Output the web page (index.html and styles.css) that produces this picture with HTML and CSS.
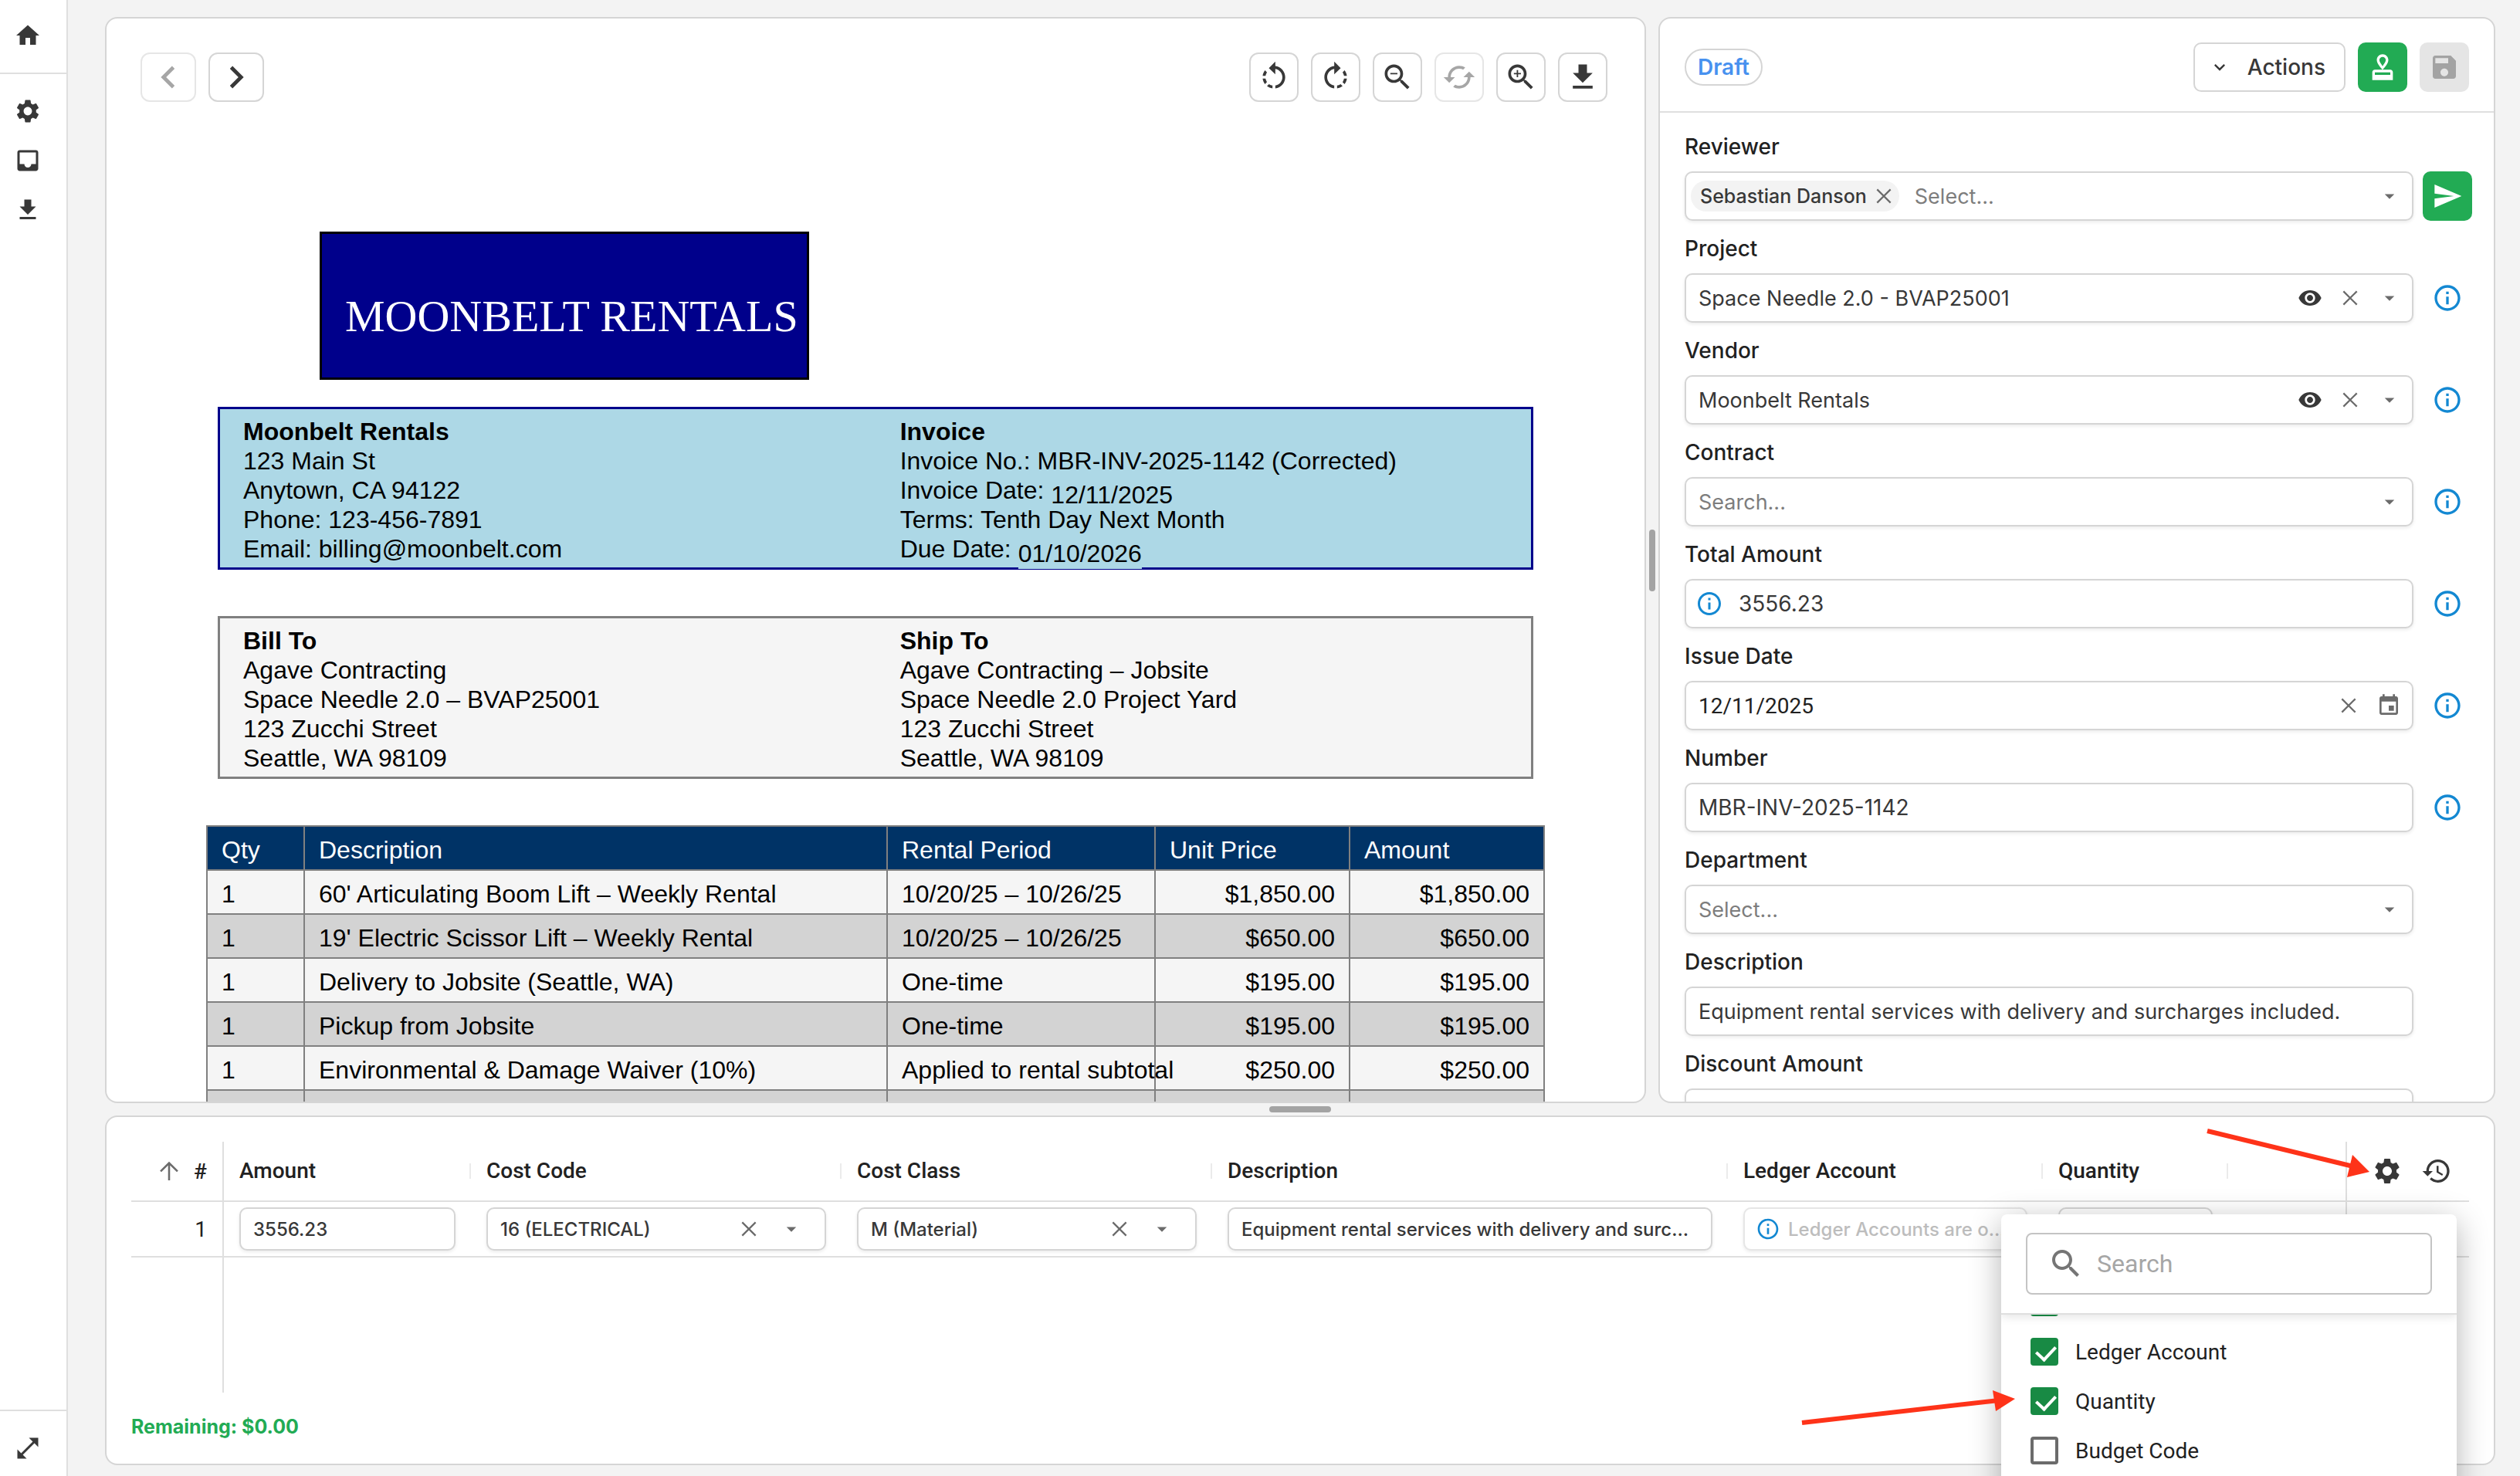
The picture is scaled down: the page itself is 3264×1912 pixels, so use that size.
FILE: index.html
```html
<!DOCTYPE html>
<html lang="en">
<head>
    <meta charset="UTF-8">
    <meta name="viewport" content="width=device-width, initial-scale=1.0">
    <title>Invoice MBR-INV-2025-1142</title>
    <link rel="stylesheet" href="styles.css">
</head>
<body>
    <!-- Icon sprite -->
    <svg class="sprite" aria-hidden="true">
        <symbol id="i-home" viewBox="0 0 24 24"><path d="M10 20v-6h4v6h5v-8h3L12 3 2 12h3v8z"/></symbol>
        <symbol id="i-settings" viewBox="0 0 24 24"><path d="M19.14 12.94c.04-.3.06-.61.06-.94 0-.32-.02-.64-.07-.94l2.03-1.58c.18-.14.23-.41.12-.61l-1.92-3.32c-.12-.22-.37-.29-.59-.22l-2.39.96c-.5-.38-1.03-.7-1.62-.94l-.36-2.54c-.04-.24-.24-.41-.48-.41h-3.84c-.24 0-.43.17-.47.41l-.36 2.54c-.59.24-1.13.57-1.62.94l-2.39-.96c-.22-.08-.47 0-.59.22L2.74 8.87c-.12.21-.08.47.12.61l2.03 1.58c-.05.3-.09.63-.09.94s.02.64.07.94l-2.03 1.58c-.18.14-.23.41-.12.61l1.92 3.32c.12.22.37.29.59.22l2.39-.96c.5.38 1.03.7 1.62.94l.36 2.54c.05.24.24.41.48.41h3.84c.24 0 .44-.17.47-.41l.36-2.54c.59-.24 1.13-.56 1.62-.94l2.39.96c.22.08.47 0 .59-.22l1.92-3.32c.12-.22.07-.47-.12-.61zM12 15.6c-1.98 0-3.6-1.62-3.6-3.6s1.62-3.6 3.6-3.6 3.6 1.62 3.6 3.6-1.62 3.6-3.6 3.6"/></symbol>
        <symbol id="i-inbox" viewBox="0 0 24 24"><path d="M19 3H4.99c-1.11 0-1.98.89-1.98 2L3 19c0 1.1.88 2 1.99 2H19c1.1 0 2-.9 2-2V5c0-1.11-.9-2-2-2m0 12h-4c0 1.66-1.35 3-3 3s-3-1.34-3-3H4.99V5H19z"/></symbol>
        <symbol id="i-download" viewBox="0 0 24 24"><path d="M19 9h-4V3H9v6H5l7 7zM5 18v2h14v-2z"/></symbol>
        <symbol id="i-expand" viewBox="0 0 24 24"><path d="M21 11V3h-8l3.29 3.29-10 10L3 13v8h8l-3.29-3.29 10-10z"/></symbol>
        <symbol id="i-prev" viewBox="0 0 24 24"><path d="M15.41 7.41 14 6l-6 6 6 6 1.41-1.41L10.83 12z"/></symbol>
        <symbol id="i-next" viewBox="0 0 24 24"><path d="M10 6 8.59 7.41 13.17 12l-4.58 4.59L10 18l6-6z"/></symbol>
        <symbol id="i-rotate-left" viewBox="0 0 24 24"><path d="M7.11 8.53 5.7 7.11C4.8 8.27 4.24 9.61 4.07 11h2.02c.14-.87.49-1.72 1.02-2.47M6.09 13H4.07c.17 1.39.72 2.73 1.62 3.89l1.41-1.42c-.52-.75-.87-1.59-1.01-2.47m1.01 5.32c1.16.9 2.51 1.44 3.9 1.61V17.9c-.87-.15-1.71-.49-2.46-1.03zM13 4.07V1L8.45 5.55 13 10V6.09c2.84.48 5 2.94 5 5.91s-2.16 5.43-5 5.91v2.02c3.95-.49 7-3.85 7-7.93s-3.05-7.44-7-7.93"/></symbol>
        <symbol id="i-rotate-right" viewBox="0 0 24 24"><path d="M15.55 5.55 11 1v3.07C7.06 4.56 4 7.92 4 12s3.05 7.44 7 7.93v-2.02c-2.84-.48-5-2.94-5-5.91s2.16-5.43 5-5.91V10zM19.93 11c-.17-1.39-.72-2.73-1.62-3.89l-1.42 1.42c.54.75.88 1.6 1.02 2.47zM13 17.9v2.02c1.39-.17 2.74-.71 3.9-1.61l-1.44-1.44c-.75.54-1.59.89-2.46 1.03m3.89-2.42 1.42 1.41c.9-1.16 1.45-2.5 1.62-3.89h-2.02c-.14.87-.48 1.72-1.02 2.48"/></symbol>
        <symbol id="i-zoom-out" viewBox="0 0 24 24"><path d="M15.5 14h-.79l-.28-.27C15.41 12.59 16 11.11 16 9.5 16 5.91 13.09 3 9.5 3S3 5.91 3 9.5 5.91 16 9.5 16c1.61 0 3.09-.59 4.23-1.57l.27.28v.79l5 4.99L20.49 19zm-6 0C7.01 14 5 11.99 5 9.5S7.01 5 9.5 5 14 7.01 14 9.5 11.99 14 9.5 14M7 9h5v1H7z"/></symbol>
        <symbol id="i-zoom-in" viewBox="0 0 24 24"><path d="M15.5 14h-.79l-.28-.27C15.41 12.59 16 11.11 16 9.5 16 5.91 13.09 3 9.5 3S3 5.91 3 9.5 5.91 16 9.5 16c1.61 0 3.09-.59 4.23-1.57l.27.28v.79l5 4.99L20.49 19zm-6 0C7.01 14 5 11.99 5 9.5S7.01 5 9.5 5 14 7.01 14 9.5 11.99 14 9.5 14m2.5-4h-2v2H9v-2H7V9h2V7h1v2h2z"/></symbol>
        <symbol id="i-reset" viewBox="0 0 24 24"><path d="m19 8-4 4h3c0 3.31-2.69 6-6 6-1.01 0-1.97-.25-2.8-.7l-1.46 1.46C8.97 19.54 10.43 20 12 20c4.42 0 8-3.58 8-8h3zM6 12c0-3.31 2.69-6 6-6 1.01 0 1.97.25 2.8.7l1.46-1.46C15.03 4.46 13.57 4 12 4c-4.42 0-8 3.58-8 8H1l4 4 4-4z"/></symbol>
        <symbol id="i-stamp" viewBox="0 0 24 24"><path d="M4 16v6h16v-6c0-1.1-.9-2-2-2H6c-1.1 0-2 .9-2 2m14 2H6v-2h12zM12 2C9.54 2 7.5 4.04 7.5 6.5c0 3.2 4.5 7.5 4.5 7.5s4.5-4.3 4.5-7.5C16.5 4.04 14.46 2 12 2m0 9.2c-.83-1.3-2.5-3.09-2.5-4.7C9.5 5.12 10.62 4 12 4s2.5 1.12 2.5 2.5c0 1.6-1.67 3.4-2.5 4.7"/></symbol>
        <symbol id="i-save" viewBox="0 0 24 24"><path d="M17 3H5c-1.11 0-2 .9-2 2v14c0 1.1.89 2 2 2h14c1.1 0 2-.9 2-2V7zm-5 16c-1.66 0-3-1.34-3-3s1.34-3 3-3 3 1.34 3 3-1.34 3-3 3m3-10H5V5h10z"/></symbol>
        <symbol id="i-send" viewBox="0 0 24 24"><path d="M2.01 21 23 12 2.01 3 2 10l15 2-15 2z"/></symbol>
        <symbol id="i-eye" viewBox="0 0 24 24"><path d="M12 4.5C7 4.5 2.73 7.61 1 12c1.73 4.39 6 7.5 11 7.5s9.27-3.11 11-7.5c-1.73-4.39-6-7.5-11-7.5M12 17c-2.76 0-5-2.24-5-5s2.24-5 5-5 5 2.24 5 5-2.24 5-5 5m0-8c-1.66 0-3 1.34-3 3s1.34 3 3 3 3-1.34 3-3-1.34-3-3-3"/></symbol>
        <symbol id="i-close" viewBox="0 0 24 24"><path d="M5.5 5.5l13 13M18.5 5.5l-13 13" fill="none" stroke="currentColor" stroke-width="1.7"/></symbol>
        <symbol id="i-caret" viewBox="0 0 24 24"><path d="m7 10 5 5 5-5z"/></symbol>
        <symbol id="i-chevron" viewBox="0 0 24 24"><path d="M16.59 8.59 12 13.17 7.41 8.59 6 10l6 6 6-6z"/></symbol>
        <symbol id="i-info" viewBox="0 0 24 24"><path d="M11 7h2v2h-2zm0 4h2v6h-2zm1-9C6.48 2 2 6.48 2 12s4.48 10 10 10 10-4.48 10-10S17.52 2 12 2m0 18c-4.41 0-8-3.59-8-8s3.59-8 8-8 8 3.59 8 8-3.59 8-8 8"/></symbol>
        <symbol id="i-calendar" viewBox="0 0 24 24"><path d="M17 12h-5v5h5zM16 1v2H8V1H6v2H5c-1.11 0-1.99.9-1.99 2L3 19c0 1.1.89 2 2 2h14c1.1 0 2-.9 2-2V5c0-1.1-.9-2-2-2h-1V1zm3 18H5V8h14z"/></symbol>
        <symbol id="i-up" viewBox="0 0 24 24"><path d="M12 20V5M4.7 12.3 12 5l7.3 7.3" fill="none" stroke="currentColor" stroke-width="1.7"/></symbol>
        <symbol id="i-history" viewBox="0 0 24 24"><path d="M13 3c-4.97 0-9 4.03-9 9H1l3.89 3.89.07.14L9 12H6c0-3.87 3.13-7 7-7s7 3.13 7 7-3.13 7-7 7c-1.93 0-3.68-.79-4.94-2.06l-1.42 1.42C8.27 19.99 10.51 21 13 21c4.97 0 9-4.03 9-9s-4.03-9-9-9m-1 5v5l4.28 2.54.72-1.21-3.5-2.08V8z"/></symbol>
        <symbol id="i-search" viewBox="0 0 24 24"><path d="M15.5 14h-.79l-.28-.27C15.41 12.59 16 11.11 16 9.5 16 5.91 13.09 3 9.5 3S3 5.91 3 9.5 5.91 16 9.5 16c1.61 0 3.09-.59 4.23-1.57l.27.28v.79l5 4.99L20.49 19zm-6 0C7.01 14 5 11.99 5 9.5S7.01 5 9.5 5 14 7.01 14 9.5 11.99 14 9.5 14"/></symbol>
    </svg>

    <div class="app">
        <nav class="sidebar" aria-label="Main">
            <div class="sidebar-top">
                <a class="sidebar-link" href="#" aria-label="Home"><svg class="icon icon-36"><use href="#i-home"/></svg></a>
            </div>
            <div class="sidebar-menu">
                <a class="sidebar-link" href="#" aria-label="Settings"><svg class="icon icon-36"><use href="#i-settings"/></svg></a>
                <a class="sidebar-link" href="#" aria-label="Inbox"><svg class="icon icon-36"><use href="#i-inbox"/></svg></a>
                <a class="sidebar-link" href="#" aria-label="Downloads"><svg class="icon icon-36"><use href="#i-download"/></svg></a>
            </div>
            <div class="sidebar-bottom">
                <button class="sidebar-link" type="button" aria-label="Expand"><svg class="icon icon-36"><use href="#i-expand"/></svg></button>
            </div>
        </nav>

        <main class="workspace">
            <!-- Document preview -->
            <section class="panel preview">
                <div class="toolbar">
                    <div class="toolbar-group">
                        <button class="tool tool-wide" type="button" aria-label="Previous page" disabled><svg class="icon icon-58"><use href="#i-prev"/></svg></button>
                        <button class="tool tool-wide" type="button" aria-label="Next page"><svg class="icon icon-58"><use href="#i-next"/></svg></button>
                    </div>
                    <div class="toolbar-group">
                        <button class="tool" type="button" aria-label="Rotate left"><svg class="icon icon-44"><use href="#i-rotate-left"/></svg></button>
                        <button class="tool" type="button" aria-label="Rotate right"><svg class="icon icon-44"><use href="#i-rotate-right"/></svg></button>
                        <button class="tool" type="button" aria-label="Zoom out"><svg class="icon icon-44"><use href="#i-zoom-out"/></svg></button>
                        <button class="tool" type="button" aria-label="Reset" disabled><svg class="icon icon-44"><use href="#i-reset"/></svg></button>
                        <button class="tool" type="button" aria-label="Zoom in"><svg class="icon icon-44"><use href="#i-zoom-in"/></svg></button>
                        <button class="tool" type="button" aria-label="Download"><svg class="icon icon-44"><use href="#i-download"/></svg></button>
                    </div>
                </div>

                <article class="invoice">
                    <div class="invoice-logo">MOONBELT RENTALS</div>

                    <div class="invoice-box invoice-box-blue">
                        <div>
                            <strong>Moonbelt Rentals</strong>
                            <p>123 Main St</p>
                            <p>Anytown, CA 94122</p>
                            <p>Phone: 123-456-7891</p>
                            <p>Email: billing@moonbelt.com</p>
                        </div>
                        <div>
                            <strong>Invoice</strong>
                            <p>Invoice No.: MBR-INV-2025-1142 (Corrected)</p>
                            <p>Invoice Date: <span class="amended">12/11/2025</span></p>
                            <p>Terms: Tenth Day Next Month</p>
                            <p>Due Date: <span class="amended">01/10/2026</span></p>
                        </div>
                    </div>

                    <div class="invoice-box invoice-box-gray">
                        <div>
                            <strong>Bill To</strong>
                            <p>Agave Contracting</p>
                            <p>Space Needle 2.0 – BVAP25001</p>
                            <p>123 Zucchi Street</p>
                            <p>Seattle, WA 98109</p>
                        </div>
                        <div>
                            <strong>Ship To</strong>
                            <p>Agave Contracting – Jobsite</p>
                            <p>Space Needle 2.0 Project Yard</p>
                            <p>123 Zucchi Street</p>
                            <p>Seattle, WA 98109</p>
                        </div>
                    </div>

                    <table class="invoice-table">
                        <colgroup>
                            <col class="c-qty">
                            <col class="c-desc">
                            <col class="c-period">
                            <col class="c-price">
                            <col class="c-total">
                        </colgroup>
                        <thead>
                            <tr><th>Qty</th><th>Description</th><th>Rental Period</th><th>Unit Price</th><th>Amount</th></tr>
                        </thead>
                        <tbody>
                            <tr><td>1</td><td>60' Articulating Boom Lift – Weekly Rental</td><td>10/20/25 – 10/26/25</td><td class="num">$1,850.00</td><td class="num">$1,850.00</td></tr>
                            <tr><td>1</td><td>19' Electric Scissor Lift – Weekly Rental</td><td>10/20/25 – 10/26/25</td><td class="num">$650.00</td><td class="num">$650.00</td></tr>
                            <tr><td>1</td><td>Delivery to Jobsite (Seattle, WA)</td><td>One-time</td><td class="num">$195.00</td><td class="num">$195.00</td></tr>
                            <tr><td>1</td><td>Pickup from Jobsite</td><td>One-time</td><td class="num">$195.00</td><td class="num">$195.00</td></tr>
                            <tr><td>1</td><td>Environmental &amp; Damage Waiver (10%)</td><td>Applied to rental subtotal</td><td class="num">$250.00</td><td class="num">$250.00</td></tr>
                            <tr><td></td><td></td><td></td><td></td><td></td></tr>
                        </tbody>
                    </table>
                </article>
            </section>

            <div class="splitter splitter-v"></div>

            <!-- Invoice form -->
            <section class="panel details">
                <header class="details-header">
                    <span class="status">Draft</span>
                    <div class="details-actions">
                        <button class="btn-actions" type="button"><svg class="icon icon-28"><use href="#i-chevron"/></svg>Actions</button>
                        <button class="btn-square btn-green" type="button" aria-label="Approve"><svg class="icon icon-40"><use href="#i-stamp"/></svg></button>
                        <button class="btn-square btn-disabled" type="button" aria-label="Save" disabled><svg class="icon icon-40"><use href="#i-save"/></svg></button>
                    </div>
                </header>

                <form class="form">
                    <div class="field">
                        <label for="reviewer">Reviewer</label>
                        <div class="control control-tags">
                            <span class="chip">Sebastian Danson<button type="button" aria-label="Remove Sebastian Danson"><svg class="icon icon-32"><use href="#i-close"/></svg></button></span>
                            <select id="reviewer" class="empty"><option>Select...</option></select>
                            <svg class="icon icon-30 muted"><use href="#i-caret"/></svg>
                        </div>
                        <button class="btn-square btn-green" type="button" aria-label="Send"><svg class="icon icon-40"><use href="#i-send"/></svg></button>
                    </div>
                    <div class="field">
                        <label for="project">Project</label>
                        <div class="control">
                            <select id="project"><option>Space Needle 2.0 - BVAP25001</option></select>
                            <button type="button" aria-label="View project"><svg class="icon icon-32"><use href="#i-eye"/></svg></button>
                            <button class="muted" type="button" aria-label="Clear project"><svg class="icon icon-32"><use href="#i-close"/></svg></button>
                            <svg class="icon icon-30 muted"><use href="#i-caret"/></svg>
                        </div>
                        <svg class="icon icon-40 info"><use href="#i-info"/></svg>
                    </div>
                    <div class="field">
                        <label for="vendor">Vendor</label>
                        <div class="control">
                            <select id="vendor"><option>Moonbelt Rentals</option></select>
                            <button type="button" aria-label="View vendor"><svg class="icon icon-32"><use href="#i-eye"/></svg></button>
                            <button class="muted" type="button" aria-label="Clear vendor"><svg class="icon icon-32"><use href="#i-close"/></svg></button>
                            <svg class="icon icon-30 muted"><use href="#i-caret"/></svg>
                        </div>
                        <svg class="icon icon-40 info"><use href="#i-info"/></svg>
                    </div>
                    <div class="field">
                        <label for="contract">Contract</label>
                        <div class="control">
                            <select id="contract" class="empty"><option>Search...</option></select>
                            <svg class="icon icon-30 muted"><use href="#i-caret"/></svg>
                        </div>
                        <svg class="icon icon-40 info"><use href="#i-info"/></svg>
                    </div>
                    <div class="field">
                        <label for="total">Total Amount</label>
                        <div class="control control-lead">
                            <svg class="icon icon-36 info"><use href="#i-info"/></svg>
                            <input id="total" class="figures" type="text" value="3556.23">
                        </div>
                        <svg class="icon icon-40 info"><use href="#i-info"/></svg>
                    </div>
                    <div class="field">
                        <label for="issued">Issue Date</label>
                        <div class="control">
                            <input id="issued" class="date" type="text" value="12/11/2025">
                            <button class="muted" type="button" aria-label="Clear date"><svg class="icon icon-32"><use href="#i-close"/></svg></button>
                            <button class="muted" type="button" aria-label="Choose date"><svg class="icon icon-32"><use href="#i-calendar"/></svg></button>
                        </div>
                        <svg class="icon icon-40 info"><use href="#i-info"/></svg>
                    </div>
                    <div class="field">
                        <label for="number">Number</label>
                        <div class="control"><input id="number" class="figures" type="text" value="MBR-INV-2025-1142"></div>
                        <svg class="icon icon-40 info"><use href="#i-info"/></svg>
                    </div>
                    <div class="field">
                        <label for="department">Department</label>
                        <div class="control">
                            <select id="department" class="empty"><option>Select...</option></select>
                            <svg class="icon icon-30 muted"><use href="#i-caret"/></svg>
                        </div>
                    </div>
                    <div class="field">
                        <label for="description">Description</label>
                        <div class="control"><input id="description" type="text" value="Equipment rental services with delivery and surcharges included."></div>
                    </div>
                    <div class="field">
                        <label for="discount">Discount Amount</label>
                        <div class="control"><input id="discount" type="text"></div>
                    </div>
                </form>
            </section>

            <div class="splitter splitter-h"></div>

            <!-- Line items -->
            <section class="panel lines">
                <table class="grid">
                    <colgroup>
                        <col class="g-index">
                        <col class="g-amount">
                        <col class="g-code">
                        <col class="g-class">
                        <col class="g-desc">
                        <col class="g-ledger">
                        <col class="g-qty">
                        <col class="g-fill">
                        <col class="g-tools">
                    </colgroup>
                    <thead>
                        <tr>
                            <th class="pin-left"><div class="sort"><svg class="icon icon-36 muted"><use href="#i-up"/></svg>#</div></th>
                            <th><div class="head">Amount</div></th>
                            <th><div class="head">Cost Code</div></th>
                            <th><div class="head">Cost Class</div></th>
                            <th><div class="head">Description</div></th>
                            <th><div class="head">Ledger Account</div></th>
                            <th><div class="head">Quantity</div></th>
                            <th></th>
                            <th class="pin-right">
                                <div class="grid-tools">
                                    <button type="button" aria-label="Columns"><svg class="icon icon-40"><use href="#i-settings"/></svg></button>
                                    <button type="button" aria-label="History"><svg class="icon icon-40"><use href="#i-history"/></svg></button>
                                </div>
                            </th>
                        </tr>
                    </thead>
                    <tbody>
                        <tr class="line">
                            <td class="pin-left">1</td>
                            <td><div class="control control-cell"><input type="text" aria-label="Amount" value="3556.23"></div></td>
                            <td>
                                <div class="control control-cell control-pick">
                                    <select aria-label="Cost Code"><option>16 (ELECTRICAL)</option></select>
                                    <button class="muted" type="button" aria-label="Clear cost code"><svg class="icon icon-32"><use href="#i-close"/></svg></button>
                                    <svg class="icon icon-30 muted"><use href="#i-caret"/></svg>
                                </div>
                            </td>
                            <td>
                                <div class="control control-cell control-pick">
                                    <select aria-label="Cost Class"><option>M (Material)</option></select>
                                    <button class="muted" type="button" aria-label="Clear cost class"><svg class="icon icon-32"><use href="#i-close"/></svg></button>
                                    <svg class="icon icon-30 muted"><use href="#i-caret"/></svg>
                                </div>
                            </td>
                            <td><div class="control control-cell"><input type="text" aria-label="Description" value="Equipment rental services with delivery and surcharges included."></div></td>
                            <td>
                                <div class="control control-cell control-off">
                                    <svg class="icon icon-32 info"><use href="#i-info"/></svg>
                                    <input type="text" aria-label="Ledger Account" value="Ledger Accounts are o..." disabled>
                                </div>
                            </td>
                            <td><div class="control control-cell"><input type="text" aria-label="Quantity"></div></td>
                            <td></td>
                            <td class="pin-right"></td>
                        </tr>
                        <tr class="rest">
                            <td class="pin-left"></td>
                            <td colspan="7"></td>
                            <td></td>
                        </tr>
                    </tbody>
                </table>
                <p class="remaining">Remaining: $0.00</p>

                <div class="columns-menu">
                    <div class="columns-search">
                        <label class="search-box">
                            <svg class="icon icon-48"><use href="#i-search"/></svg>
                            <input type="text" placeholder="Search" aria-label="Search">
                        </label>
                    </div>
                    <div class="columns-list">
                        <label class="columns-item"><input type="checkbox" aria-label="Description" checked></label>
                        <label class="columns-item"><input type="checkbox" checked>Ledger Account</label>
                        <label class="columns-item"><input type="checkbox" checked>Quantity</label>
                        <label class="columns-item"><input type="checkbox">Budget Code</label>
                    </div>
                </div>

                <svg class="pointer pointer-gear" viewBox="0 0 212 66" aria-hidden="true">
                    <path d="M1 6 190 52" stroke="#fe3319" stroke-width="6"/>
                    <path d="M211 59 189 37 182 66z" fill="#fe3319"/>
                </svg>
                <svg class="pointer pointer-quantity" viewBox="0 0 278 50" aria-hidden="true">
                    <path d="M1 43 256 14" stroke="#fe3319" stroke-width="6"/>
                    <path d="M277 12 248 1 252 28z" fill="#fe3319"/>
                </svg>
            </section>
        </main>
    </div>
</body>
</html>
```
FILE: styles.css
```css
* {
    margin: 0;
    padding: 0;
    box-sizing: border-box;
}

body {
    height: 100vh;
    overflow: hidden;
    background: #f3f3f3;
    color: #212121;
    font-family: Inter, Roboto, "Liberation Sans", sans-serif;
    font-size: 28px;
}

button, input, select {
    font: inherit;
    color: inherit;
    background: none;
    border: none;
    outline: none;
}

button {
    display: flex;
    align-items: center;
    justify-content: center;
}

/* Icons */
.sprite {
    position: absolute;
    width: 0;
    height: 0;
}

.icon {
    flex: none;
    display: block;
    fill: currentColor;
}

.icon-28 { width: 28px; height: 28px; }
.icon-30 { width: 30px; height: 30px; }
.icon-32 { width: 32px; height: 32px; }
.icon-36 { width: 36px; height: 36px; }
.icon-40 { width: 40px; height: 40px; }
.icon-44 { width: 44px; height: 44px; }
.icon-48 { width: 48px; height: 48px; }
.icon-58 { width: 58px; height: 58px; }

.muted {
    color: #6b6b6b;
}

.info {
    color: #1388d2;
}

/* Layout */
.app {
    display: flex;
    height: 100%;
}

.sidebar {
    display: flex;
    flex-direction: column;
    width: 88px;
    flex: none;
    background: #fff;
    border-right: 2px solid #dfdfdf;
    color: #383838;
}

.sidebar-link {
    display: flex;
    align-items: center;
    height: 64px;
    padding-left: 18px;
    color: inherit;
}

.sidebar-top {
    padding: 14px 0 16px;
    border-bottom: 2px solid #dfdfdf;
}

.sidebar-menu {
    flex: 1;
    padding-top: 16px;
}

.sidebar-bottom {
    padding: 16px 0 4px;
    border-top: 2px solid #dfdfdf;
}

.workspace {
    flex: 1;
    min-width: 0;
    display: grid;
    grid-template-columns: minmax(0, 1996fr) 16px minmax(0, 1084fr);
    grid-template-rows: minmax(0, 1fr) 16px auto;
    padding: 22px 32px 14px 48px;
}

.panel {
    background: #fff;
    border: 2px solid #d5d5d5;
    border-radius: 16px;
}

.splitter {
    display: flex;
    align-items: center;
    justify-content: center;
}

.splitter::before {
    content: "";
    background: #a3a3a3;
    border-radius: 4px;
}

.splitter-v::before {
    width: 8px;
    height: 80px;
}

.splitter-h {
    grid-column: 1 / -1;
}

.splitter-h::before {
    width: 80px;
    height: 8px;
}

/* Preview */
.preview {
    overflow: hidden;
    padding-top: 44px;
}

.toolbar {
    display: flex;
    justify-content: space-between;
    padding: 0 48px 0 44px;
}

.toolbar-group {
    display: flex;
    gap: 16px;
}

.tool {
    width: 64px;
    height: 64px;
    border: 2px solid #d5d5d5;
    border-radius: 12px;
    color: #383838;
}

.tool-wide {
    width: 72px;
}

.tool:disabled {
    color: #a6a6a6;
    border-color: #e6e6e6;
}

.invoice {
    padding: 168px 129px 0;
    color: #000;
    font-family: "Liberation Sans", Arial, sans-serif;
    font-size: 32px;
    line-height: 38px;
}

.invoice-logo {
    width: 634px;
    height: 192px;
    margin: 0 0 35px 147px;
    padding: 14px 0 0 30px;
    background: #00008b;
    border: 3px solid #000;
    color: #fff;
    font-family: "Liberation Serif", "Times New Roman", serif;
    font-size: 58px;
    line-height: 186px;
    white-space: nowrap;
}

.invoice-box {
    display: grid;
    grid-template-columns: 51% 49%;
    margin: 0 15px 60px;
    padding: 10px 0 5px 30px;
    border: 3px solid;
}

.invoice-box-blue {
    background: #add8e6;
    border-color: #00008b;
}

.invoice-box-gray {
    background: #f5f5f5;
    border-color: #808080;
}

.invoice-box strong {
    display: block;
}

/* Dates typed over the scanned page sit a little lower than the line */
.amended {
    padding-bottom: 2px;
    background: #add8e6;
    line-height: 0;
    vertical-align: -6px;
}

.invoice-table {
    width: 100%;
    table-layout: fixed;
    border-collapse: collapse;
}

.c-qty { width: 126px; }
.c-period { width: 347px; }
.c-price { width: 252px; }
.c-total { width: 252px; }

.invoice-table th,
.invoice-table td {
    height: 57px;
    padding: 4px 18px 0;
    border: 2px solid #808080;
    font-weight: normal;
    text-align: left;
    white-space: nowrap;
}

.invoice-table thead tr {
    background: #003366;
    color: #fff;
}

.invoice-table tbody tr {
    background: #f5f5f5;
}

.invoice-table tbody tr:nth-child(even) {
    background: #d3d3d3;
}

.invoice-table .num {
    text-align: right;
}

/* Details */
.details {
    overflow: hidden;
}

.details-header {
    display: flex;
    align-items: center;
    justify-content: space-between;
    height: 122px;
    padding: 6px 32px 0;
    border-bottom: 2px solid #dfdfdf;
}

.status {
    padding: 0 15px;
    border: 2px solid #d5d5d5;
    border-radius: 24px;
    color: #4791ef;
    font-weight: 600;
    line-height: 44px;
}

.details-actions {
    display: flex;
    gap: 16px;
}

.btn-actions {
    gap: 22px;
    height: 64px;
    padding: 0 24px 0 18px;
    border: 2px solid #d5d5d5;
    border-radius: 10px;
    color: #383838;
    font-weight: 500;
}

.btn-square {
    width: 64px;
    height: 64px;
    border-radius: 10px;
}

.btn-green {
    background: #22ab54;
    color: #fff;
}

.btn-disabled {
    background: #e5e5e5;
    color: #a3a3a3;
}

.form {
    display: flex;
    flex-direction: column;
    gap: 16px;
    padding: 24px 28px 0 32px;
}

.field {
    display: grid;
    grid-template-columns: minmax(0, 1fr) 64px;
    gap: 12px;
    align-items: center;
    justify-items: center;
}

.field > label {
    grid-column: 1 / -1;
    justify-self: start;
    font-weight: 500;
    line-height: 40px;
}

.control {
    display: flex;
    align-items: center;
    gap: 20px;
    width: 100%;
    height: 64px;
    padding: 0 14px 0 16px;
    background: #fff;
    border: 2px solid #d5d5d5;
    border-radius: 10px;
    box-shadow: 0 2px 4px rgba(0, 0, 0, 0.08);
    color: #383838;
    font-size: 27px;
}

.control input,
.control select {
    flex: 1;
    min-width: 0;
    height: 100%;
    appearance: none;
    text-overflow: ellipsis;
}

.control .empty {
    color: #7d7d7d;
}

.control .figures {
    font-size: 28px;
}

.control .date {
    color: #212121;
    font-family: Roboto, sans-serif;
    font-size: 28px;
}

.control-tags {
    padding-left: 6px;
}

.control-lead {
    padding-left: 12px;
}

.chip {
    display: flex;
    align-items: center;
    height: 40px;
    padding: 0 4px 0 12px;
    gap: 6px;
    border-radius: 20px;
    background: #f3f3f3;
    font-size: 25px;
    font-weight: 500;
}

.chip button {
    color: #6b6b6b;
}

/* Line items */
.lines {
    position: relative;
    grid-column: 1 / -1;
    padding: 32px 32px 28px;
}

.grid {
    width: 100%;
    table-layout: fixed;
    border-collapse: separate;
    border-spacing: 0;
}

.g-index { width: 120px; }
.g-amount { width: 320px; }
.g-code { width: 480px; }
.g-class { width: 480px; }
.g-desc { width: 668px; }
.g-ledger { width: 408px; }
.g-qty { width: 240px; }
.g-tools { width: 160px; }

.grid th {
    height: 78px;
    border-bottom: 2px solid #dfdfdf;
    font-family: Roboto, sans-serif;
    font-weight: 500;
    text-align: left;
}

.grid td {
    padding: 0 20px;
}

.grid .line td {
    height: 72px;
    border-bottom: 2px solid #dfdfdf;
}

.grid .rest td {
    height: 175px;
}

.grid .pin-left {
    padding-right: 20px;
    border-right: 2px solid #dfdfdf;
    text-align: right;
}

.grid .pin-right {
    border-left: 2px solid #dfdfdf;
}

.grid td.pin-left {
    font-family: Roboto, sans-serif;
}

.sort {
    display: flex;
    align-items: center;
    justify-content: flex-end;
    gap: 14px;
}

.head {
    padding-left: 20px;
    border-right: 2px solid #ebebeb;
    line-height: 20px;
}

.grid-tools {
    display: flex;
    gap: 24px;
    padding-left: 32px;
    color: #383838;
}

.control-cell {
    height: 56px;
    padding-right: 22px;
    font-size: 24px;
    font-weight: 500;
}

.control-pick {
    gap: 24px;
    padding-right: 28px;
}

.control-off {
    gap: 10px;
    padding-left: 14px;
    border-color: #e6e6e6;
    color: #bdbdbd;
}

.remaining {
    margin-top: 24px;
    color: #22ab54;
    font-size: 25px;
    font-weight: 700;
    line-height: 40px;
}

/* Column chooser */
.columns-menu {
    position: absolute;
    top: 126px;
    right: 48px;
    width: 590px;
    height: 400px;
    overflow: hidden;
    border-radius: 8px;
    background: #fff;
    box-shadow: 0 10px 40px rgba(0, 0, 0, 0.3);
    font-family: Roboto, sans-serif;
}

.columns-search {
    position: relative;
    z-index: 1;
    padding: 24px 32px;
    border-bottom: 2px solid #dfdfdf;
    background: #fff;
    box-shadow: 0 2px 12px rgba(0, 0, 0, 0.12);
}

.search-box {
    display: flex;
    align-items: center;
    gap: 16px;
    height: 80px;
    padding: 0 26px;
    border: 2px solid #c4c4c4;
    border-radius: 8px;
    color: #757575;
}

.search-box input {
    flex: 1;
    min-width: 0;
    font-size: 32px;
}

.search-box input::placeholder {
    color: #a6a6a6;
}

/* Scrolled so the first entry is almost hidden under the search bar */
.columns-list {
    margin-top: -48px;
    padding-left: 38px;
}

.columns-item {
    display: flex;
    align-items: center;
    gap: 22px;
    height: 64px;
    font-size: 28px;
}

.columns-item input {
    position: relative;
    appearance: none;
    width: 36px;
    height: 36px;
    border: 4px solid #6b6b6b;
    border-radius: 4px;
}

.columns-item input:checked {
    border-color: #188a44;
    background: #188a44;
}

.columns-item input:checked::after {
    content: "";
    position: absolute;
    top: 1px;
    left: 8px;
    width: 12px;
    height: 20px;
    border: solid #fff;
    border-width: 0 4px 4px 0;
    transform: rotate(43deg);
}

/* Callout arrows */
.pointer {
    position: absolute;
}

.pointer-gear {
    top: 12px;
    right: 160px;
    width: 212px;
    height: 66px;
}

.pointer-quantity {
    top: 353px;
    right: 619px;
    width: 278px;
    height: 50px;
}
```
